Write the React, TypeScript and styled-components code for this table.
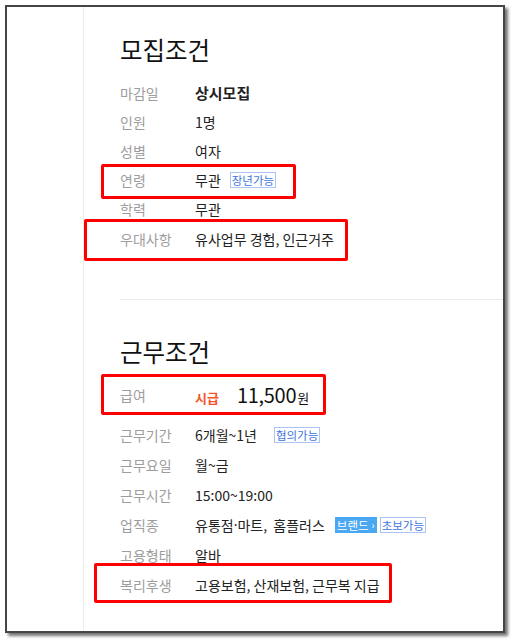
import React from "react";
import styled, { createGlobalStyle } from "styled-components";

const Global = createGlobalStyle`
  html, body { margin: 0; padding: 0; background: #ffffff; }
  body { font-family: "Noto Sans CJK KR", "Noto Sans", sans-serif; }
  * { box-sizing: border-box; }
`;

const Root = styled.div`
  position: relative;
  width: 511px;
  height: 640px;
  overflow: hidden;
`;

const Frame = styled.div`
  margin: 5px;
  width: 500px;
  height: 628px;
  border: 2px solid #454545;
  box-shadow: 3px 3px 3px rgba(0, 0, 0, 0.55);
  background: #fff;
  display: flex;
  overflow: hidden;
`;

const Gutter = styled.div`
  width: 76px;
  flex: none;
`;

const Column = styled.div`
  flex: 1;
  border-left: 1px solid #ececec;
  padding-left: 36px;
  padding-top: 28px;
`;

const Section = styled.section<{ $divider?: boolean; $top: number; $bottom: number }>`
  padding-top: ${(p) => p.$top}px;
  padding-bottom: ${(p) => p.$bottom}px;
  border-top: ${(p) => (p.$divider ? "1px solid #ebebeb" : "none")};
`;

const Title = styled.h2`
  margin: 0 0 13px;
  font-size: 24.5px;
  line-height: 30px;
  font-weight: 400;
  color: #111;
`;

const Row = styled.div<{ $h: number; $mb?: number }>`
  display: flex;
  align-items: center;
  height: ${(p) => p.$h}px;
  margin-bottom: ${(p) => p.$mb ?? 0}px;
`;

const Label = styled.div`
  width: 75px;
  flex: none;
  font-size: 14px;
  color: #9d9d9d;
  line-height: 18px;
`;

const Value = styled.div<{ $bold?: boolean }>`
  display: flex;
  align-items: center;
  font-size: ${(p) => (p.$bold ? "15px" : "14px")};
  font-weight: ${(p) => (p.$bold ? 700 : 400)};
  color: #222;
  line-height: 18px;
  white-space: pre;
`;

const Dot = styled.span`
  font-family: "Noto Sans", sans-serif;
`;

const Badge = styled.span<{ $filled?: boolean; $ml: number }>`
  display: inline-flex;
  align-items: center;
  height: 16px;
  margin-left: ${(p) => p.$ml}px;
  padding: 0 1px;
  font-size: 11.5px;
  line-height: 14px;
  border: 1px solid ${(p) => (p.$filled ? "#4aa7f2" : "#aac4f3")};
  background: ${(p) => (p.$filled ? "#4aa7f2" : "#fff")};
  color: ${(p) => (p.$filled ? "#fff" : "#3e76de")};
  white-space: nowrap;
`;

const Chevron = styled.span`
  margin-left: 3px;
  font-size: 10px;
`;

const Pay = styled.div`
  display: flex;
  align-items: baseline;
`;

const PayType = styled.span`
  font-size: 13px;
  font-weight: 700;
  color: #f5542a;
  margin-right: 18px;
`;

const Amount = styled.span`
  font-size: 20px;
  color: #111;
  letter-spacing: -0.3px;
`;

const Won = styled.span`
  font-size: 13px;
  color: #111;
  margin-left: 1px;
`;

const Highlight = styled.div<{ $x: number; $y: number; $w: number; $h: number }>`
  position: absolute;
  left: ${(p) => p.$x}px;
  top: ${(p) => p.$y}px;
  width: ${(p) => p.$w}px;
  height: ${(p) => p.$h}px;
  border: 3px solid #ff0000;
  border-radius: 2px;
  pointer-events: none;
`;

export default function App() {
  return (
    <Root>
      <Global />
      <Frame>
        <Gutter />
        <Column>
          <Section $top={0} $bottom={46}>
            <Title>모집조건</Title>
            <Row $h={29.2}>
              <Label>마감일</Label>
              <Value $bold>상시모집</Value>
            </Row>
            <Row $h={29.2}>
              <Label>인원</Label>
              <Value>1명</Value>
            </Row>
            <Row $h={29.2}>
              <Label>성별</Label>
              <Value>여자</Value>
            </Row>
            <Row $h={29.2}>
              <Label>연령</Label>
              <Value>
                무관
                <Badge $ml={9}>장년가능</Badge>
              </Value>
            </Row>
            <Row $h={29.2}>
              <Label>학력</Label>
              <Value>무관</Value>
            </Row>
            <Row $h={29.2}>
              <Label>우대사항</Label>
              <Value>유사업무 경험, 인근거주</Value>
            </Row>
          </Section>
          <Section $divider $top={37} $bottom={0}>
            <Title>근무조건</Title>
            <Row $h={29.6} $mb={10.7}>
              <Label>급여</Label>
              <Pay>
                <PayType>시급</PayType>
                <Amount>11,500</Amount>
                <Won>원</Won>
              </Pay>
            </Row>
            <Row $h={30}>
              <Label>근무기간</Label>
              <Value>
                6개월~1년
                <Badge $ml={17}>협의가능</Badge>
              </Value>
            </Row>
            <Row $h={30}>
              <Label>근무요일</Label>
              <Value>월~금</Value>
            </Row>
            <Row $h={30}>
              <Label>근무시간</Label>
              <Value>15:00~19:00</Value>
            </Row>
            <Row $h={30}>
              <Label>업직종</Label>
              <Value>
                유통점<Dot>·</Dot>마트,  홈플러스
                <Badge $filled $ml={10}>
                  브랜드<Chevron>›</Chevron>
                </Badge>
                <Badge $ml={3}>초보가능</Badge>
              </Value>
            </Row>
            <Row $h={30}>
              <Label>고용형태</Label>
              <Value>알바</Value>
            </Row>
            <Row $h={30}>
              <Label>복리후생</Label>
              <Value>고용보험, 산재보험, 근무복 지급</Value>
            </Row>
          </Section>
        </Column>
      </Frame>
      <Highlight $x={101} $y={164} $w={195} $h={35} />
      <Highlight $x={84} $y={219} $w={264} $h={42} />
      <Highlight $x={101} $y={374} $w={225} $h={41} />
      <Highlight $x={94} $y={563} $w={298} $h={40} />
    </Root>
  );
}
